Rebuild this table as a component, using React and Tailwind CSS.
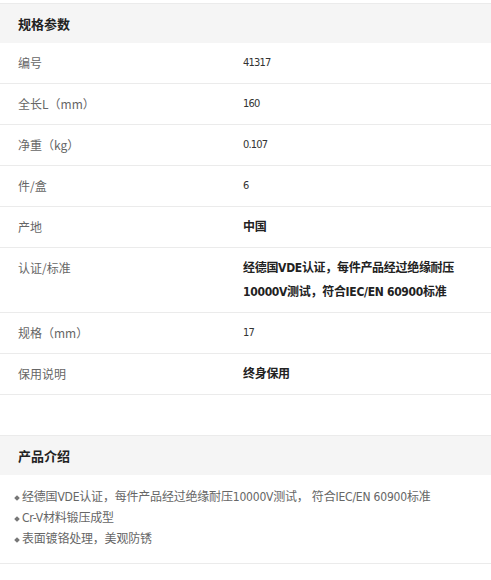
import React from "react";

const specs = [
  { label: "编号", value: "41317" },
  { label: "全长L（mm）", value: "160" },
  { label: "净重（kg）", value: "0.107" },
  { label: "件/盒", value: "6" },
  { label: "产地", value: "中国", bold: true },
  {
    label: "认证/标准",
    value: (
      <>
        经德国VDE认证，每件产品经过绝缘耐压
        <br />
        10000V测试，符合IEC/EN 60900标准
      </>
    ),
    bold: true,
  },
  { label: "规格（mm）", value: "17" },
  { label: "保用说明", value: "终身保用", bold: true },
];

const intro = [
  "经德国VDE认证，每件产品经过绝缘耐压10000V测试， 符合IEC/EN 60900标准",
  "Cr-V材料锻压成型",
  "表面镀铬处理，美观防锈",
];

const base = { fontFamily: '"Noto Sans CJK SC", sans-serif' };
const narrow = {
  fontFamily: '"DejaVu Sans Condensed", "Noto Sans CJK SC", sans-serif',
};

function SectionTitle({ children }) {
  return (
    <div className="h-10 flex items-center px-[18px] bg-[#f5f5f5] border-t border-[#ebebeb] text-[13px] font-bold text-[#222]">
      {children}
    </div>
  );
}

export default function App() {
  return (
    <div className="w-[491px] min-h-[580px] bg-white pt-[3px]" style={base}>
      <SectionTitle>规格参数</SectionTitle>
      <div>
        {specs.map((s, i) => (
          <div
            key={i}
            className="flex py-2 leading-6 text-[12px] border-b border-[#ebebeb]"
          >
            <div className="w-[243px] pl-[18px] text-[#666] shrink-0">{s.label}</div>
            <div
              className={
                s.bold
                  ? "font-bold text-[#222] tracking-[-0.3px]"
                  : "text-[#333] text-[11px] tracking-[-0.8px]"
              }
              style={narrow}
            >
              {s.value}
            </div>
          </div>
        ))}
      </div>

      <div className="mt-10">
        <SectionTitle>产品介绍</SectionTitle>
        <ul
          className="pt-3 pb-[13px] pl-[14px] border-b border-[#ebebeb] text-[12px] text-[#666] leading-[21px] tracking-[-0.2px]"
          style={narrow}
        >
          {intro.map((t, i) => (
            <li key={i} className="flex items-center">
              <span className="w-[4px] h-[4px] rotate-45 bg-[#777] ml-[1px] mr-[3px] shrink-0" />
              {t}
            </li>
          ))}
        </ul>
      </div>
    </div>
  );
}
